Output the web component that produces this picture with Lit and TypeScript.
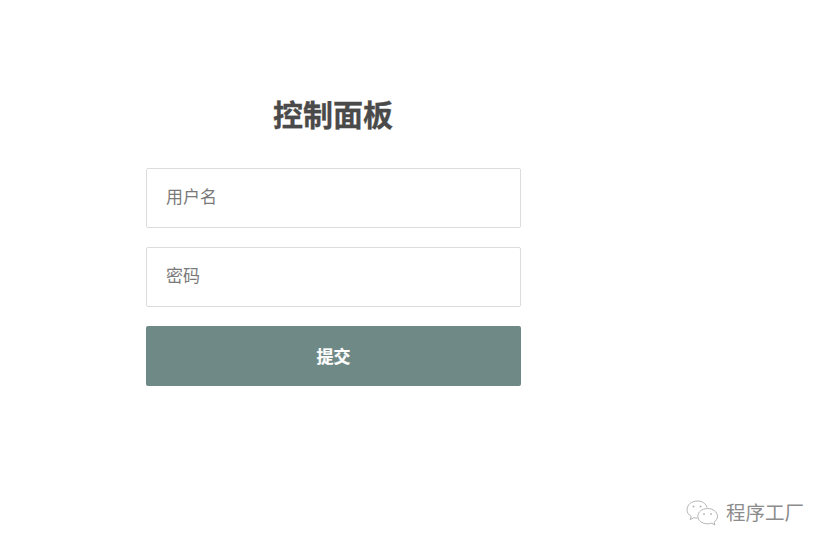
import { LitElement, html, css } from "lit";
import { customElement } from "lit/decorators.js";

@customElement("app-root")
export class AppRoot extends LitElement {
  static styles = css`
    :host {
      display: block;
      position: relative;
      height: 549px;
      overflow: hidden;
      background: #fff;
      font-family: "Liberation Sans", "Noto Sans CJK SC", sans-serif;
    }
    .panel {
      width: 375px;
      margin-left: 146px;
      padding-top: 95px;
      display: flex;
      flex-direction: column;
      box-sizing: border-box;
    }
    h1 {
      margin: 0 0 31px;
      padding-right: 1px;
      font-size: 30px;
      line-height: 42px;
      font-weight: 700;
      color: #4a4a4a;
      text-align: center;
      -webkit-text-stroke: 0.3px #4a4a4a;
    }
    form {
      display: flex;
      flex-direction: column;
      gap: 19px;
    }
    input {
      display: block;
      box-sizing: border-box;
      width: 100%;
      height: 60px;
      padding: 0 19px;
      border: 1px solid #dcdcdc;
      border-radius: 2px;
      outline: none;
      background: #fff;
      font: inherit;
      font-size: 17px;
      color: #4a4a4a;
    }
    input::placeholder {
      color: #7a7a7a;
      opacity: 1;
    }
    button {
      display: block;
      box-sizing: border-box;
      width: 100%;
      height: 60px;
      padding: 0 0 2px;
      border: 0;
      border-radius: 2px;
      background: #6f8987;
      color: #fff;
      font: inherit;
      font-size: 17px;
      font-weight: 700;
      -webkit-text-stroke: 0.2px #fff;
    }
    .mark {
      position: absolute;
      left: 686px;
      top: 500px;
      display: flex;
      align-items: center;
      gap: 7px;
      color: #8c8c8c;
      font-size: 19.5px;
      line-height: 26px;
    }
    .mark svg {
      display: block;
      width: 33px;
      height: 26px;
    }
  `;

  render() {
    return html`
      <div class="panel">
        <h1>控制面板</h1>
        <form @submit=${(e: Event) => e.preventDefault()}>
          <input type="text" placeholder="用户名" />
          <input type="password" placeholder="密码" />
          <button type="submit">提交</button>
        </form>
      </div>
      <div class="mark">
        <svg viewBox="0 0 33 26" fill="none" stroke="#b4b4b4" stroke-width="1">
          <path d="M21 7.500C20 3.500 16 1 11.500 1 5.500 1 1 4.900 1 9.700c0 2.900 1.600 5 4.200 6.700l-1 3.200 3.700-2c1.200.3 2.400.5 3.600.5" />
          <path d="M21.500 8.500c5.500 0 10 3.500 10 7.800 0 2.400-1.400 4.300-3.400 5.800l.8 2.900-3.200-1.800c-1.300.4-2.800.6-4.200.6-5.500 0-9.700-3.300-9.700-7.500 0-4.300 4.200-7.800 9.700-7.800z" />
          <g fill="#b4b4b4" stroke="none">
            <circle cx="7.500" cy="6.500" r="1" />
            <circle cx="14.500" cy="6.500" r="1" />
            <circle cx="18" cy="14" r=".9" />
            <circle cx="25" cy="14" r=".9" />
          </g>
        </svg>
        <span>程序工厂</span>
      </div>
    `;
  }
}
